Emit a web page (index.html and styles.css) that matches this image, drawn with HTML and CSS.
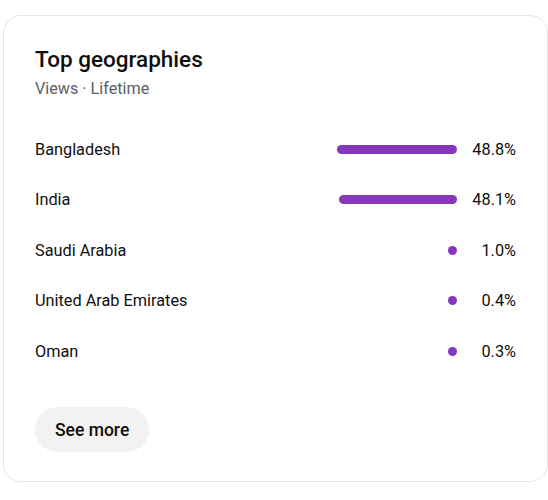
FILE: index.html
```html
<!DOCTYPE html>
<html>
<head>
<meta charset="utf-8">
<link rel="stylesheet" href="styles.css">
</head>
<body>
<div class="card">
  <h2 class="title">Top geographies</h2>
  <div class="subtitle">Views · Lifetime</div>
  <ul class="rows">
    <li class="row"><span class="name">Bangladesh</span><span class="track"><span class="bar" style="width:120px"></span></span><span class="pct">48.8%</span></li>
    <li class="row"><span class="name">India</span><span class="track"><span class="bar" style="width:118px"></span></span><span class="pct">48.1%</span></li>
    <li class="row"><span class="name">Saudi Arabia</span><span class="track"><span class="bar dot"></span></span><span class="pct">1.0%</span></li>
    <li class="row"><span class="name">United Arab Emirates</span><span class="track"><span class="bar dot"></span></span><span class="pct">0.4%</span></li>
    <li class="row"><span class="name">Oman</span><span class="track"><span class="bar dot"></span></span><span class="pct">0.3%</span></li>
  </ul>
  <button class="more">See more</button>
</div>
</body>
</html>
```
FILE: styles.css
```css
html, body {
  margin: 0;
  padding: 0;
  background: #ffffff;
}
body {
  font-family: Roboto, "Noto Sans", sans-serif;
  color: #0f0f0f;
}
.card {
  margin: 15px 0 0 3px;
  width: 545px;
  box-sizing: border-box;
  border: 1px solid #e5e5e5;
  border-radius: 18px;
  padding: 29px 31px 29px 31px;
}
.title {
  margin: 0;
  font-size: 22.5px;
  font-weight: 500;
  line-height: 28px;
  letter-spacing: 0;
}
.subtitle {
  margin-top: 6px;
  font-size: 16.2px;
  line-height: 20px;
  color: #606060;
}
.rows {
  list-style: none;
  margin: 24.75px 0 0 0;
  padding: 0;
}
.row {
  display: flex;
  align-items: center;
  height: 50.5px;
  font-size: 16.3px;
}
.name {
  flex: 1;
}
.track {
  display: flex;
  justify-content: flex-end;
  align-items: center;
  width: 130px;
}
.bar {
  display: block;
  height: 9px;
  border-radius: 5px;
  background: #8637bd;
}
.dot {
  width: 9px;
  border-radius: 50%;
}
.pct {
  width: 44px;
  margin-left: 15px;
  text-align: right;
}
.more {
  margin-top: 30.75px;
  height: 45px;
  padding: 0 20px;
  border: none;
  border-radius: 23px;
  background: #f2f2f2;
  font-family: Roboto, "Noto Sans", sans-serif;
  font-size: 17.5px;
  font-weight: 500;
  color: #0f0f0f;
}
```
